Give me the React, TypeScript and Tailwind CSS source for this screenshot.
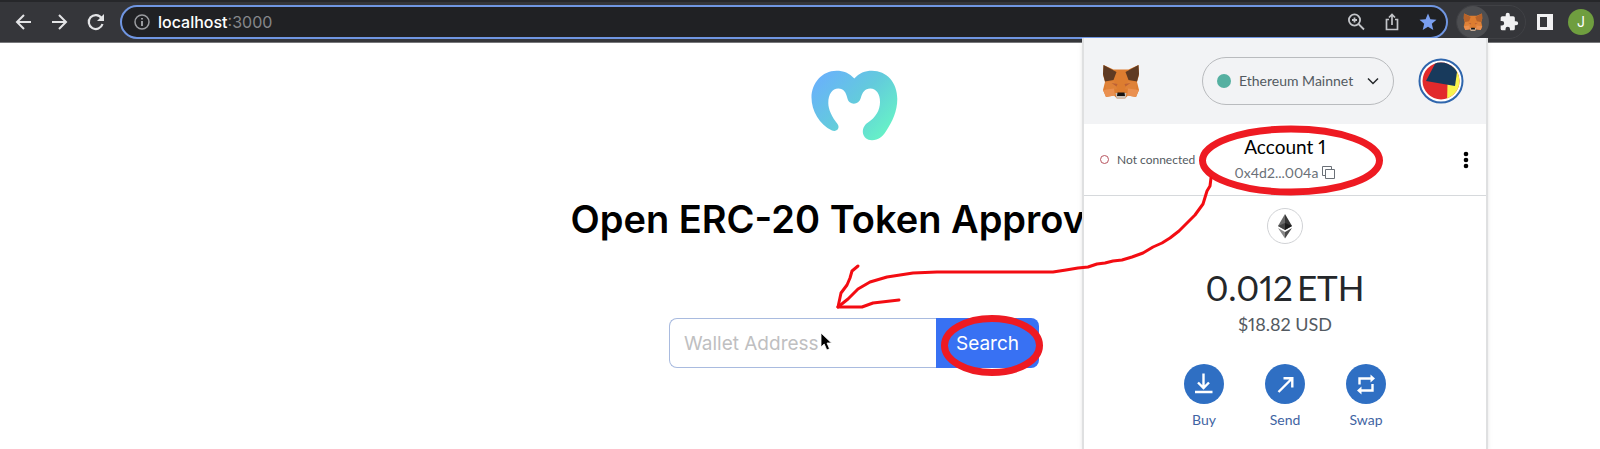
import { ReactNode } from 'react';

const walletActions = [
  {
    id: 'buy',
    label: 'Buy',
    icon: (
      <svg viewBox="0 0 40 40" className="h-10 w-10" fill="none" stroke="#fff" strokeWidth="2.400">
        <path d="M19.500 9.500v14.500M14 18.500l5.500 5.500 5.500-5.500M11 28h17.500" />
      </svg>
    ),
  },
  {
    id: 'send',
    label: 'Send',
    icon: (
      <svg viewBox="0 0 40 40" className="h-10 w-10" fill="none" stroke="#fff" strokeWidth="2.400">
        <path d="M13.500 28L27 14.500M18.500 14.200H27.300V23.500" />
      </svg>
    ),
  },
  {
    id: 'swap',
    label: 'Swap',
    icon: (
      <svg viewBox="0 0 40 40" className="h-10 w-10" fill="none" stroke="#fff" strokeWidth="2.400">
        <path d="M13.500 20.500v-6h12M26.500 20v6.500h-12" />
        <path d="M24.500 10.500l4.500 4-4.500 4zM15.500 22.500l-4.500 4 4.500 4z" fill="#fff" stroke="none" />
      </svg>
    ),
  },
];

function FoxLogo({ className, earColor = '#5f3a22' }: { className?: string; earColor?: string }) {
  return (
    <svg viewBox="0 0 37 35" className={className} aria-hidden="true">
      <path d="M1 1l10 4.500h15L36 1l.5 10-2 7 2 8-3 7-8-1.500-3 3h-8l-3-3L3.500 33 .500 26l2-8-2-7z" fill="#dd7d30" />
      <path d="M1 1l13 7-3 8-8.500 1.500L.500 10zM36 1L23 8l3 8 8.500 1.500 2-7.500z" fill={earColor} />
      <path d="M2.500 18l9-1 3 8-11 1.500zM34.500 18l-9-1-3 8 11 1.500z" fill="#df8238" />
      <path d="M.500 26l11-1.500 1 7L3.500 33zM36.500 26l-11-1.500-1 7 9 1.500z" fill="#ea9050" />
      <path d="M9 19l6 1-1 2.500zM28 19l-6 1 1 2.500z" fill="#bd6236" />
      <path d="M13 29h11l-1 5.500h-9z" fill="#c9c0b8" />
      <path d="M15 28.500h7l.5 3.500h-8z" fill="#171310" />
    </svg>
  );
}

function IconButton({ label, className = '', children }: { label: string; className?: string; children: ReactNode }) {
  return (
    <button type="button" aria-label={label} className={`flex shrink-0 items-center justify-center ${className}`}>
      {children}
    </button>
  );
}

function BrowserToolbar() {
  return (
    <header className="flex h-[43px] items-center border-t-2 border-b border-t-[#26272a] border-b-[#77787b] bg-[#35363a] pr-1.5 pl-3">
      <nav className="flex shrink-0 items-center gap-3">
        <IconButton label="Back" className="h-6 w-6">
          <svg viewBox="0 0 24 24" className="h-6 w-6" fill="none" stroke="#e3e4e6" strokeWidth="2">
            <path d="M19 12H5M12 5l-7 7 7 7" />
          </svg>
        </IconButton>
        <IconButton label="Forward" className="h-6 w-6">
          <svg viewBox="0 0 24 24" className="h-6 w-6" fill="none" stroke="#e3e4e6" strokeWidth="2">
            <path d="M4 12h14M11 5l7 7-7 7" />
          </svg>
        </IconButton>
        <IconButton label="Reload" className="h-6 w-6">
          <svg viewBox="0 0 24 24" className="h-6 w-6" fill="none" stroke="#e3e4e6" strokeWidth="2.200">
            <path d="M17.500 8a7 7 0 1 0 1 6" />
            <path d="M20 4v7h-7z" fill="#e3e4e6" stroke="none" />
          </svg>
        </IconButton>
      </nav>

      <div className="ml-3 flex h-[34px] min-w-0 flex-1 items-center rounded-full border-2 border-[#7096e2] bg-[#202124] pr-2 pl-3">
        <svg viewBox="0 0 16 16" className="mr-2 h-4 w-4 shrink-0" fill="none" stroke="#9a9ca0" strokeWidth="1.500">
          <circle cx="8" cy="8" r="7" />
          <path d="M8 7v5M8 4v1.500" strokeWidth="2" />
        </svg>
        <a href="http://localhost:3000" className="text-base text-[#85878b]">
          <span className="font-medium text-white">localhost</span>:3000
        </a>
        <div className="ml-auto flex items-center gap-4">
          <IconButton label="Zoom" className="h-5 w-5">
            <svg viewBox="0 0 20 20" className="h-5 w-5" fill="none" stroke="#c3c5c9" strokeWidth="1.800">
              <circle cx="8.500" cy="8" r="5.600" />
              <path d="M12.500 12l5.500 5.500M6 8h5M8.500 5.500v5" />
            </svg>
          </IconButton>
          <IconButton label="Share" className="h-5 w-5">
            <svg viewBox="0 0 20 20" className="h-5 w-5" fill="none" stroke="#c3c5c9" strokeWidth="1.700">
              <path d="M7 7.500H4.500v10h11v-10H13M10 13V2.500M7 5.500l3-3 3 3" />
            </svg>
          </IconButton>
          <IconButton label="Bookmark this tab" className="h-5 w-5">
            <svg viewBox="0 0 20 20" className="h-5 w-5" fill="#7a9ff0">
              <path d="M10 1.500l2.400 5.800 6.100.5-4.700 4 1.500 6.200L10 14.700 4.700 18l1.500-6.200-4.700-4 6.100-.5z" />
            </svg>
          </IconButton>
        </div>
      </div>

      <div className="ml-2 flex shrink-0 items-center rounded-full border border-[#404145] pr-1.5">
        <IconButton label="MetaMask" className="h-8 w-8 rounded-full bg-[#4d4e51]">
          <FoxLogo className="h-[18px] w-5" earColor="#b5622a" />
        </IconButton>
        <IconButton label="Extensions" className="ml-2.5 h-5 w-5">
          <svg viewBox="0 0 24 24" className="h-5 w-5" fill="#f1f1f2">
            <path d="M20.500 11H19V7a2 2 0 0 0-2-2h-4V3.500a2.500 2.500 0 0 0-5 0V5H4a2 2 0 0 0-2 2v3.800h1.500a2.700 2.700 0 0 1 0 5.400H2V20a2 2 0 0 0 2 2h3.800v-1.500a2.700 2.700 0 0 1 5.400 0V22H17a2 2 0 0 0 2-2v-4h1.500a2.500 2.500 0 0 0 0-5z" />
          </svg>
        </IconButton>
      </div>
      <IconButton label="Side panel" className="ml-2.5 h-[18px] w-[18px]">
        <svg viewBox="0 0 18 18" className="h-[18px] w-[18px]">
          <path d="M1 1h16v16H1z" fill="#f1f1f2" />
          <path d="M4 4h7v10H4z" fill="#35363a" />
        </svg>
      </IconButton>
      <button type="button" className="ml-3.5 h-[26px] w-[26px] shrink-0 rounded-full bg-[#6f9e3f] text-sm text-white">
        J
      </button>
    </header>
  );
}

function SearchPage() {
  return (
    <main className="flex flex-col items-center overflow-hidden pt-6 pl-[108px]">
      <svg viewBox="0 0 88 76" className="h-[76px] w-[88px]" aria-label="Moralis">
        <defs>
          <linearGradient id="moralis" x1="0" y1="0.200" x2="0.900" y2="0.900">
            <stop offset="0" stopColor="#69b2fa" />
            <stop offset="0.500" stopColor="#63cbdc" />
            <stop offset="1" stopColor="#67f3c6" />
          </linearGradient>
        </defs>
        <path
          d="M44.300 11.500C39.500 6 33.500 3.700 26.500 3.700 12 3.700 1.500 16 1.500 30.500 1.500 44 9.500 57.500 22 63.500c4.500 2 8.500-2.500 5.500-6.500C22 50 18.300 42.500 18.300 36c0-9 4-14.500 10-14.500 5.500 0 7.700 4 9 9.500 1.500 7.500 11.500 7.500 13.500 0 1.500-5.500 4-9.500 9.500-9.500 6 0 9.700 5.500 9.700 13.500 0 8.500-4.500 15.500-12 20.500-8.500 5.500-6 17.700 4 17.700 6.500 0 10.500-3.500 14-9C82.500 54.500 87.300 44 87.300 32 87.300 15 76.500 3.700 62 3.700c-7 0-13 2.300-17.700 7.800z"
          fill="url(#moralis)"
        />
      </svg>
      <h1 className="mt-[53px] text-[38px] leading-[46px] font-semibold whitespace-nowrap text-black">
        Open ERC-20 Token Approvals
      </h1>
      <form className="mt-[76px] flex h-[50px]" onSubmit={(e) => e.preventDefault()}>
        <input
          type="text"
          aria-label="Wallet Address"
          placeholder="Wallet Address"
          className="w-[267px] rounded-l-lg border border-r-0 border-[#a9bbdf] bg-white px-3.5 pt-0.5 text-[19px] text-gray-800 outline-none placeholder:text-[#bfbfc1]"
        />
        <button type="submit" className="w-[103px] rounded-r-lg bg-[#3871f3] pt-0.5 text-[19px] text-white">
          Search
        </button>
      </form>
    </main>
  );
}

function WalletPopup() {
  return (
    <aside className="absolute top-[38px] right-[112px] bottom-0 w-[406px] overflow-hidden border-x-2 border-[#dfe0e1] bg-white font-['Lato',sans-serif] proportional-nums shadow-md">
      <div className="flex h-[86px] items-center bg-[#f2f3f5] pr-[22px] pl-[18px]">
        <FoxLogo className="h-[35px] w-[38px]" />
        <button
          type="button"
          className="ml-auto flex h-12 w-[192px] items-center rounded-full border border-[#b9bbbe] px-3.5 text-sm text-[#535a61]"
        >
          <span className="mr-2 h-3.5 w-3.5 rounded-full bg-[#55b0a1]" />
          Ethereum Mainnet
          <svg viewBox="0 0 12 12" className="ml-auto h-3 w-3" fill="none" stroke="#24272a" strokeWidth="1.500">
            <path d="M1 3.500l5 5 5-5" />
          </svg>
        </button>
        <IconButton label="Accounts" className="ml-6 h-[46px] w-[46px]">
          <svg viewBox="0 0 46 46" className="h-[46px] w-[46px]">
            <defs>
              <clipPath id="avatar">
                <circle cx="23" cy="23" r="18.500" />
              </clipPath>
            </defs>
            <circle cx="23" cy="23" r="21.500" fill="#fff" stroke="#2f66ad" strokeWidth="2" />
            <g clipPath="url(#avatar)">
              <path d="M0 0h46v46H0z" fill="#e22a2c" />
              <path d="M36 2h10v44H29l.5-20z" fill="#f9f44d" />
              <path d="M19 2h15l5 12-2 14-29-5z" fill="#183a5c" />
            </g>
          </svg>
        </IconButton>
      </div>

      <div className="grid h-[72px] grid-cols-[1fr_auto_1fr] items-center border-b border-[#d6d9dc] px-4">
        <div className="flex items-center gap-2 text-xs text-[#535a61]">
          <span className="h-[9px] w-[9px] rounded-full border border-[#b8545f]" />
          Not connected
        </div>
        <div className="flex flex-col items-center pt-0.5">
          <h2 className="text-[19px] leading-6 text-black">Account 1</h2>
          <button type="button" className="flex items-center gap-1 text-sm leading-7 text-[#6a7077]">
            0x4d2...004a
            <svg viewBox="0 0 13 13" className="h-[13px] w-[13px]" fill="none" stroke="#6a7077">
              <path d="M3 9.500H.500v-9h9V3M3.500 3.500h9v9h-9z" />
            </svg>
          </button>
        </div>
        <IconButton label="Account options" className="h-6 w-2 justify-self-end">
          <svg viewBox="0 0 6 20" className="h-5 w-1.5" fill="#000">
            <circle cx="3" cy="4" r="2.300" />
            <circle cx="3" cy="10" r="2.300" />
            <circle cx="3" cy="16" r="2.300" />
          </svg>
        </IconButton>
      </div>

      <div className="flex flex-col items-center pt-3">
        <svg viewBox="0 0 36 36" className="h-9 w-9" aria-label="Ethereum">
          <circle cx="18" cy="18" r="17.500" fill="#fff" stroke="#d0d2d5" />
          <path d="M18 6l-7 12 7 4z" fill="#6a6a6a" />
          <path d="M18 6l7 12-7 4z" fill="#363636" />
          <path d="M11 18l7-3v7z" fill="#444" />
          <path d="M25 18l-7-3v7z" fill="#1b1b1b" />
          <path d="M11 20l7 4v6.500z" fill="#888" />
          <path d="M25 20l-7 4v6.500z" fill="#4a4a4a" />
        </svg>
        <p className="mt-[18px] flex gap-1 text-[35px] leading-[50px] text-[#24272a]">
          <span>0.012</span>
          <span>ETH</span>
        </p>
        <p className="text-lg leading-6 text-[#535a61]">$18.82 USD</p>
        <div className="mt-7 flex">
          {walletActions.map((action) => (
            <button
              key={action.id}
              type="button"
              className="flex w-[81px] flex-col items-center gap-1.5 text-sm text-[#3f64a3]"
            >
              <span className="rounded-full bg-[#2f6fc3]">{action.icon}</span>
              {action.label}
            </button>
          ))}
        </div>
      </div>
    </aside>
  );
}

// Hand-drawn marker strokes over the page
function Annotations() {
  return (
    <svg
      viewBox="0 0 1600 449"
      className="pointer-events-none absolute top-0 left-0 w-full"
      fill="none"
      stroke="#ee1a22"
      aria-hidden="true"
    >
      <ellipse cx="1291" cy="160.500" rx="88.500" ry="31.500" strokeWidth="7" />
      <ellipse cx="992" cy="345.500" rx="47.500" ry="27" strokeWidth="7" />
      <g stroke="#f30c12" strokeWidth="3" strokeLinecap="round" strokeLinejoin="round">
        <path d="M1211 178L1210 186 1207 191 1203 204 1195 215 1187 223 1179 231 1170 238 1162 243 1153 247 1143 253 1132 257 1122 260 1113 261 1105 263 1097 264 1088 267 1078 268 1066 270 1053 272H937L913 273 900 275 887 277 870 282 858 289 848 299 838 307" />
        <path d="M858 266L852 271 850 278 847 285 841 293 838 307H862L873 303 899 300" />
      </g>
    </svg>
  );
}

export default function App() {
  return (
    <div className="relative min-h-screen overflow-hidden bg-white font-['Inter',sans-serif]">
      <BrowserToolbar />
      <SearchPage />
      <WalletPopup />
      <Annotations />
      <svg viewBox="0 0 12 19" className="absolute top-[332px] left-[820px] h-[19px] w-3" aria-hidden="true">
        <path d="M1 1v14l3.200-3 2.600 6 2.700-1.200L7 11h4.500z" fill="#000" stroke="#fff" strokeWidth="0.800" />
      </svg>
    </div>
  );
}
